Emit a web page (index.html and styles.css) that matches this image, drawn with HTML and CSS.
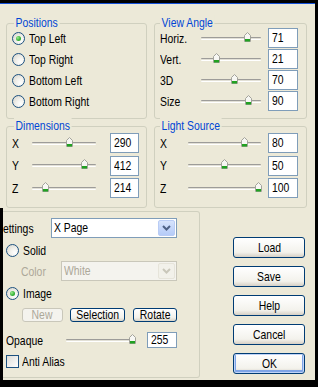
FILE: index.html
```html
<!DOCTYPE html>
<html>
<head>
<meta charset="utf-8">
<link rel="stylesheet" href="styles.css">
</head>
<body>
<div class="window">
  <div class="top">
    <div class="group g-pos">
      <span class="legend">Positions</span>
      <div class="opt"><span class="radio on"></span><span class="tx">Top Left</span></div>
      <div class="opt"><span class="radio"></span><span class="tx">Top Right</span></div>
      <div class="opt"><span class="radio"></span><span class="tx">Bottom Left</span></div>
      <div class="opt"><span class="radio"></span><span class="tx">Bottom Right</span></div>
    </div>
    <div class="group g-view">
      <span class="legend">View Angle</span>
      <div class="row"><span class="lbl"><span class="tx">Horiz.</span></span><div class="track"><span class="thumb" style="left:43px"></span></div><span class="num"><span class="tx">71</span></span></div>
      <div class="row"><span class="lbl"><span class="tx">Vert.</span></span><div class="track"><span class="thumb" style="left:12px"></span></div><span class="num"><span class="tx">21</span></span></div>
      <div class="row"><span class="lbl"><span class="tx">3D</span></span><div class="track"><span class="thumb" style="left:30px"></span></div><span class="num"><span class="tx">70</span></span></div>
      <div class="row"><span class="lbl"><span class="tx">Size</span></span><div class="track"><span class="thumb" style="left:44px"></span></div><span class="num"><span class="tx">90</span></span></div>
    </div>
    <div class="group g-dim">
      <span class="legend">Dimensions</span>
      <div class="row"><span class="lbl"><span class="tx">X</span></span><div class="track"><span class="thumb" style="left:34px"></span></div><span class="num"><span class="tx">290</span></span></div>
      <div class="row"><span class="lbl"><span class="tx">Y</span></span><div class="track"><span class="thumb" style="left:49px"></span></div><span class="num"><span class="tx">412</span></span></div>
      <div class="row"><span class="lbl"><span class="tx">Z</span></span><div class="track"><span class="thumb" style="left:10px"></span></div><span class="num"><span class="tx">214</span></span></div>
    </div>
    <div class="group g-light">
      <span class="legend">Light Source</span>
      <div class="row"><span class="lbl"><span class="tx">X</span></span><div class="track"><span class="thumb" style="left:53px"></span></div><span class="num"><span class="tx">80</span></span></div>
      <div class="row"><span class="lbl"><span class="tx">Y</span></span><div class="track"><span class="thumb" style="left:33px"></span></div><span class="num"><span class="tx">50</span></span></div>
      <div class="row"><span class="lbl"><span class="tx">Z</span></span><div class="track"><span class="thumb" style="left:67px"></span></div><span class="num"><span class="tx">100</span></span></div>
    </div>
  </div>
  <div class="bottom">
    <div class="clip">
      <div class="group g-set">
        <div class="set-row">
          <span class="set-lbl"><span class="tx">Settings</span></span>
          <div class="combo"><span class="val"><span class="tx">X Page</span></span><span class="dd"><svg width="9" height="6" viewBox="0 0 9 6"><path d="M1 1L4.5 4.5L8 1" fill="none" stroke="#4D6185" stroke-width="2"/></svg></span></div>
        </div>
        <div class="opt2 solid"><span class="radio"></span><span class="tx">Solid</span></div>
        <div class="color-row">
          <span class="color-lbl"><span class="tx">Color</span></span>
          <div class="combo dis"><span class="val"><span class="tx">White</span></span><span class="dd"><svg width="9" height="6" viewBox="0 0 9 6"><path d="M1 1L4.5 4.5L8 1" fill="none" stroke="#C9C7BA" stroke-width="2"/></svg></span></div>
        </div>
        <div class="opt2 image"><span class="radio on"></span><span class="tx">Image</span></div>
        <div class="btn-row">
          <span class="sbtn dis b-new"><span class="tx">New</span></span>
          <span class="sbtn b-sel"><span class="tx">Selection</span></span>
          <span class="sbtn b-rot"><span class="tx">Rotate</span></span>
        </div>
        <div class="op-row">
          <span class="op-lbl"><span class="tx">Opaque</span></span>
          <div class="track op-track"><span class="thumb" style="left:63px"></span></div>
          <span class="num op-num"><span class="tx">255</span></span>
        </div>
        <div class="chk-row"><span class="check"></span><span class="tx">Anti Alias</span></div>
      </div>
    </div>
    <div class="buttons">
      <span class="btn"><span class="tx">Load</span></span>
      <span class="btn"><span class="tx">Save</span></span>
      <span class="btn"><span class="tx">Help</span></span>
      <span class="btn"><span class="tx">Cancel</span></span>
      <span class="btn def"><span class="tx">OK</span></span>
    </div>
  </div>
</div>
</body>
</html>
```

FILE: styles.css
```css
html, body {
  margin: 0;
  padding: 0;
}
body {
  background: #000;
  width: 318px;
  height: 387px;
  overflow: hidden;
  font-family: "Liberation Sans", Arial, sans-serif;
  font-size: 13px;
  color: #000;
}
.tx {
  display: inline-block;
  white-space: nowrap;
  transform: scaleX(0.8);
  transform-origin: 0 50%;
}
.window {
  margin-top: 3px;
  width: 315px;
  height: 377px;
  box-sizing: border-box;
  border-top: 1px solid #1450D8;
  background: #ECE9D8;
}
.top {
  padding: 19px 0 0 6px;
  display: grid;
  grid-template-columns: 141px 153px;
  grid-template-rows: 96px 82px;
  column-gap: 7px;
  row-gap: 7px;
}
.group {
  position: relative;
  box-sizing: border-box;
  border: 1px solid #D0D0BF;
  border-radius: 3px;
}
.legend {
  position: absolute;
  top: -9px;
  left: 7px;
  padding: 0 2px;
  line-height: 15px;
  background: #ECE9D8;
  color: #0046D5;
  white-space: nowrap;
  transform: scaleX(0.8);
  transform-origin: 0 50%;
}
.g-view .legend, .g-light .legend { left: 5px; }

/* Positions */
.g-pos {
  padding: 4px 0 0 5px;
}
.opt {
  height: 21px;
  display: flex;
  align-items: center;
  gap: 4px;
}
.radio {
  flex: none;
  width: 13px;
  height: 13px;
  box-sizing: border-box;
  border: 1px solid #1C5180;
  border-radius: 50%;
  background: radial-gradient(circle at 70% 70%, #FFFFFF 0, #F2F1EC 40%, #D4D2C8 100%);
  display: flex;
  align-items: center;
  justify-content: center;
}
.radio.on::after {
  content: "";
  width: 5px;
  height: 5px;
  border-radius: 50%;
  background: radial-gradient(circle at 35% 35%, #9BEA8E 0, #3AB53A 55%, #1C8E1C 100%);
}

/* slider rows */
.row {
  height: 20px;
  display: flex;
  align-items: center;
}
.g-view, .g-light, .g-dim {
  padding-left: 5px;
}
.g-view {
  padding-top: 4px;
  display: flex;
  flex-direction: column;
  gap: 1px;
}
.g-dim, .g-light {
  padding-top: 6px;
  display: flex;
  flex-direction: column;
  gap: 2.5px;
}
.lbl {
  flex: none;
  white-space: nowrap;
}
.g-view .lbl { width: 41px; }
.g-light .lbl { width: 28px; }
.g-dim .lbl { width: 20px; }
.track {
  flex: none;
  position: relative;
  height: 1px;
  border-top: 1px solid #9D9C99;
  border-bottom: 1px solid #FFFFFF;
  background: #E2E0D6;
  border-radius: 1px;
}
.g-view .track { width: 60px; margin-right: 7px; }
.g-light .track { width: 73px; margin-right: 7px; }
.g-dim .track { width: 64px; margin-right: 14px; }
.thumb {
  position: absolute;
  top: -6px;
  width: 7px;
  height: 10px;
  background: url("data:image/svg+xml,%3Csvg xmlns='http://www.w3.org/2000/svg' width='7' height='10'%3E%3Cpath d='M0.5 3.5L3.5 0.5L6.5 3.5V9.5H0.5Z' fill='%23F7F7F3' stroke='%23A3A39B'/%3E%3Crect x='1' y='7' width='5' height='2.5' fill='%2321A121'/%3E%3C/svg%3E") no-repeat;
}
.num {
  flex: none;
  width: 30px;
  height: 20px;
  box-sizing: border-box;
  border: 1px solid #7F9DB9;
  background: #FFFFFF;
  padding-left: 3px;
  line-height: 18px;
}
.g-dim .num { width: 29px; }

/* bottom */
.bottom {
  display: flex;
  height: 172px;
}
.clip {
  flex: none;
  width: 200px;
  box-sizing: border-box;
  border-left: 3px solid #000;
  overflow: hidden;
  padding-top: 3px;
}
.g-set {
  height: 167px;
  border-left: none;
  border-radius: 0 3px 3px 0;
  padding: 6px 0 0 3px;
}
.set-row {
  display: flex;
  align-items: center;
  height: 20px;
  margin-left: -10px;
}
.set-lbl {
  width: 55px;
  flex: none;
}
.combo {
  flex: none;
  display: flex;
  width: 126px;
  height: 20px;
  box-sizing: border-box;
  border: 1px solid #7F9DB9;
  background: #FFFFFF;
}
.combo .val {
  flex: 1;
  padding-left: 2px;
  line-height: 18px;
}
.combo .dd {
  width: 17px;
  margin: 1px;
  box-sizing: border-box;
  border: 1px solid #B9CCF5;
  border-radius: 2px;
  background: linear-gradient(#D6E3FC, #B5CBF8);
  display: flex;
  align-items: center;
  justify-content: center;
}
.combo.dis {
  width: 116px;
  border-color: #C9C7BA;
  background: #F4F3EE;
}
.combo.dis .val { color: #ACA899; }
.combo.dis .dd {
  border-color: #E6E4DA;
  background: #F2F1EA;
}
.opt2 {
  display: flex;
  align-items: center;
  gap: 4px;
  height: 20px;
}
.solid { margin-top: 2px; }
.image { margin-top: 2px; }
.color-row {
  margin-top: 1px;
  display: flex;
  align-items: center;
  height: 20px;
}
.color-lbl {
  width: 40px;
  margin-left: 15px;
  color: #ACA899;
}
.btn-row {
  margin-top: 5px;
  display: flex;
  height: 14px;
}
.sbtn {
  flex: none;
  height: 14px;
  box-sizing: border-box;
  border: 1px solid #003C74;
  border-radius: 3px;
  background: linear-gradient(#FFFFFF, #F3F2EC 70%, #D8D3C7);
  text-align: center;
  line-height: 12px;
}
.sbtn.dis {
  border-color: #C9C7BA;
  color: #ACA899;
  background: #F4F3EE;
}
.b-new { width: 41px; margin-left: 16px; }
.b-sel { width: 55px; margin-left: 7px; }
.b-rot { width: 44px; margin-left: 8px; }
.op-row {
  margin-top: 10px;
  height: 16px;
  display: flex;
  align-items: center;
}
.op-lbl { width: 60px; flex: none; }
.op-track { width: 70px; margin-right: 11px; }
.op-num {
  height: 16px;
  line-height: 14px;
}
.chk-row {
  margin-top: 7px;
  height: 13px;
  display: flex;
  align-items: center;
  gap: 3px;
}
.check {
  flex: none;
  width: 13px;
  height: 13px;
  box-sizing: border-box;
  border: 1px solid #1C5180;
  background: linear-gradient(135deg, #DCDCD7, #FFFFFF);
}
.buttons {
  margin-left: 33px;
  padding-top: 29px;
  width: 72px;
  display: flex;
  flex-direction: column;
  gap: 8px;
}
.btn {
  height: 21px;
  box-sizing: border-box;
  border: 1px solid #003C74;
  border-radius: 3px;
  background: linear-gradient(#FFFFFF, #F3F2EC 75%, #D6D0C5);
  text-align: center;
  line-height: 19px;
}
.btn .tx, .sbtn .tx {
  transform-origin: 50% 50%;
}
.btn.def {
  box-shadow: inset 0 0 0 1px #C0D4F8, inset 0 -1px 0 2px #7EA4E6;
}
```
